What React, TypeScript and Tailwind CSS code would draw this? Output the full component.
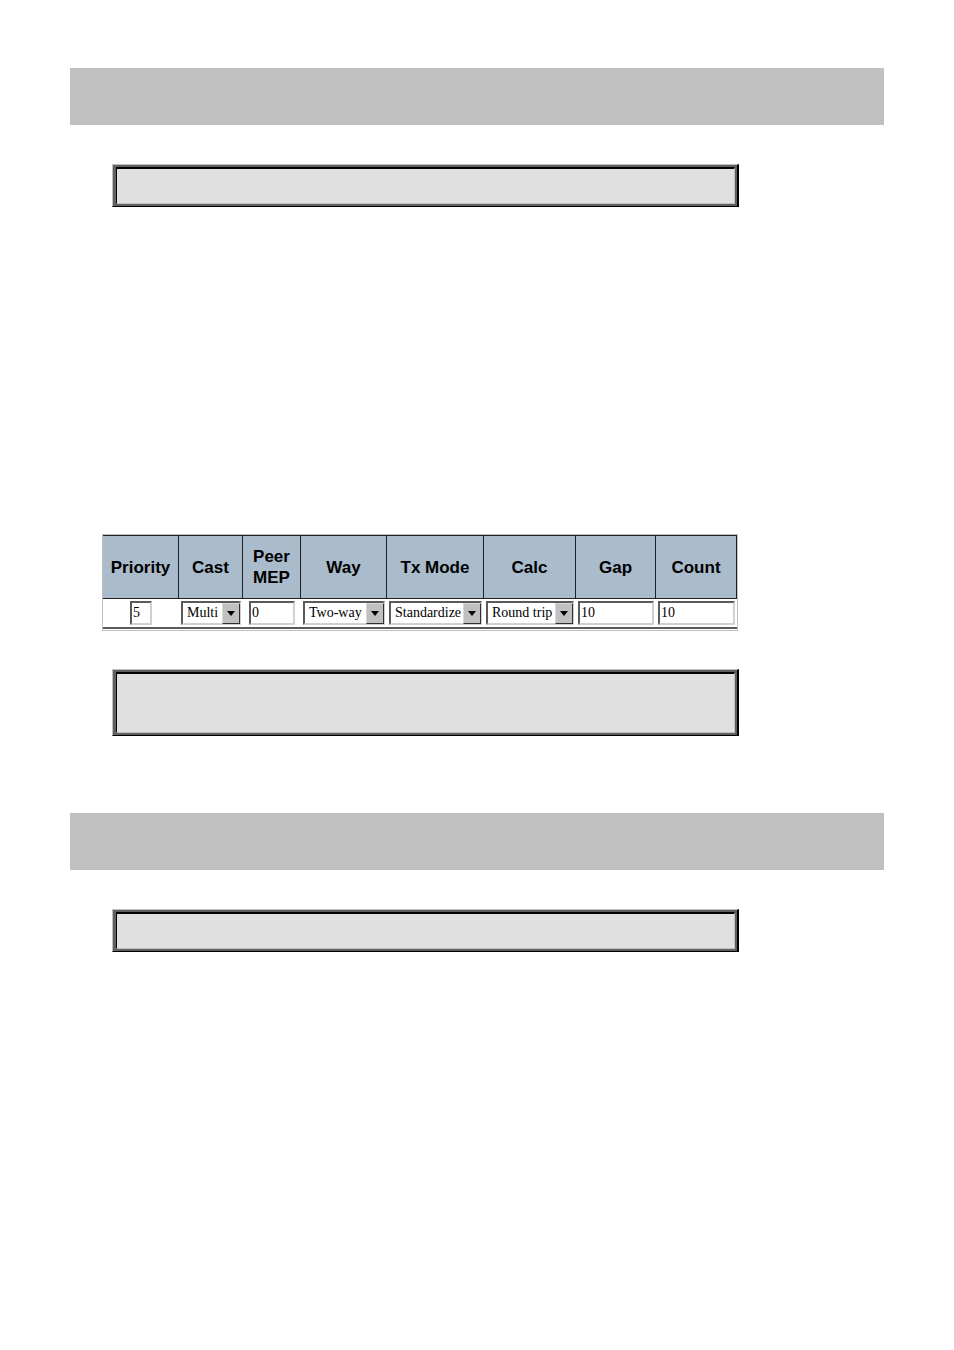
import { useState } from "react";

type Column = {
  title: string;
  col: string;
  options?: string[];
  value: string;
  box: string;
};

const columns: Column[] = [
  { title: "Priority", col: "w-[76px]", value: "5", box: "w-[22px]" },
  {
    title: "Cast",
    col: "w-[64px]",
    value: "Multi",
    options: ["Multi", "Uni"],
    box: "w-full",
  },
  { title: "Peer MEP", col: "w-[58px]", value: "0", box: "w-[46px]" },
  {
    title: "Way",
    col: "w-[86px]",
    value: "Two-way",
    options: ["One-way", "Two-way"],
    box: "w-full",
  },
  {
    title: "Tx Mode",
    col: "w-[97px]",
    value: "Standardize",
    options: ["Standardize", "Proprietary"],
    box: "w-full",
  },
  {
    title: "Calc",
    col: "w-[92px]",
    value: "Round trip",
    options: ["Round trip", "Flow"],
    box: "w-full",
  },
  { title: "Gap", col: "w-[80px]", value: "10", box: "w-full" },
  { title: "Count", col: "w-[81px]", value: "10", box: "w-full" },
];

// old style sunken field
const field =
  "block h-6 w-full appearance-none rounded-none border-2 border-t-[#5a5a5a] border-l-[#5a5a5a] border-r-[#d0d0d0] border-b-[#d0d0d0] bg-white font-['Liberation_Serif',serif] text-sm leading-5 text-black outline-none";

function Bar() {
  return <div className="h-[57px] bg-[#c0c0c0]" />;
}

function Panel({ height }: { height: string }) {
  return (
    <div className="mr-[145px] ml-[42px] border-t border-r-2 border-b border-l border-t-[#c0c0c0] border-r-black border-b-black border-l-[#c0c0c0]">
      <div className="border-2 border-l-3 border-[#606060]">
        <div
          className={`border-t-2 border-r border-b border-l border-t-black border-r-[#c0c0c0] border-b-[#c0c0c0] border-l-black bg-[#e0e0e0] ${height}`}
        />
      </div>
    </div>
  );
}

function Field({ column }: { column: Column }) {
  const [value, setValue] = useState(column.value);

  if (!column.options) {
    return (
      <div className={`mx-auto ${column.box}`}>
        <input
          type="text"
          aria-label={column.title}
          value={value}
          onChange={(e) => setValue(e.target.value)}
          className={`${field} pl-px`}
        />
      </div>
    );
  }

  return (
    <div className={`relative ${column.box}`}>
      <select
        aria-label={column.title}
        value={value}
        onChange={(e) => setValue(e.target.value)}
        className={`${field} pl-1`}
      >
        {column.options.map((option) => (
          <option key={option}>{option}</option>
        ))}
      </select>
      {/* drop-down arrow */}
      <span className="pointer-events-none absolute top-0.5 right-px bottom-px flex w-[18px] items-center justify-center border border-t-[#d8d8d8] border-r-[#303030] border-b-[#303030] border-l-[#d8d8d8] bg-[#c0c0c0]">
        <svg width="8" height="5" viewBox="0 0 8 5">
          <path d="M0 0h8L4 5z" fill="#000" />
        </svg>
      </span>
    </div>
  );
}

export default function App() {
  return (
    <main className="min-h-screen bg-white px-[70px] pt-[68px] pb-16">
      <Bar />
      <div className="mt-[39px]">
        <Panel height="h-[37px]" />
      </div>

      <div className="mt-[327px] mr-[146px] ml-8 border border-[#c0c0c0] pb-px">
        <table className="w-full table-fixed border-separate border-spacing-0 border-b-2 border-[#5a5a5a]">
          <colgroup>
            {columns.map((column) => (
              <col key={column.title} className={column.col} />
            ))}
          </colgroup>
          <thead>
            <tr>
              {columns.map((column) => (
                <th
                  key={column.title}
                  className="h-16 border-t border-r border-b border-[#202020] bg-[#aabbcb] px-1 py-0 text-center align-middle font-['Liberation_Sans',sans-serif] text-[17px] leading-[21px] font-bold text-black"
                >
                  {column.title}
                </th>
              ))}
            </tr>
          </thead>
          <tbody>
            <tr>
              {columns.map((column) => (
                <td key={column.title} className="py-0.5 pr-0.5 pl-0.5">
                  <Field column={column} />
                </td>
              ))}
            </tr>
          </tbody>
        </table>
      </div>

      <div className="mt-[38px]">
        <Panel height="h-[61px]" />
      </div>

      <div className="mt-[77px]">
        <Bar />
      </div>
      <div className="mt-[39px]">
        <Panel height="h-[37px]" />
      </div>
    </main>
  );
}
